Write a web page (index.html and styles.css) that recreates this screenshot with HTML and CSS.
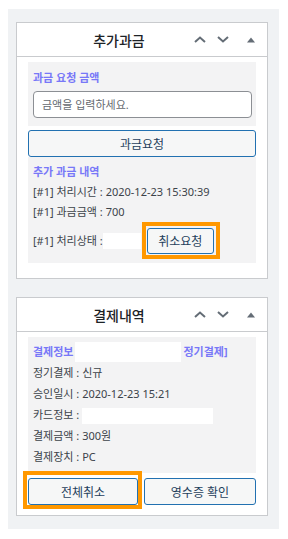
FILE: index.html
```html
<!DOCTYPE html>
<html lang="ko">
<head>
    <meta charset="UTF-8">
    <meta name="viewport" content="width=device-width, initial-scale=1.0">
    <title>결제 관리</title>
    <link rel="stylesheet" href="styles.css">
</head>
<body>
    <div class="wrap">
        <div class="panel">
            <div class="panel-head">
                <h2 class="panel-title">추가과금</h2>
                <div class="actions">
                    <button class="handle" aria-label="위로">
                        <svg width="12" height="7" viewBox="0 0 12 7"><polyline points="1,6 6,1.5 11,6" /></svg>
                    </button>
                    <button class="handle" aria-label="아래로">
                        <svg width="12" height="7" viewBox="0 0 12 7"><polyline points="1,1 6,5.5 11,1" /></svg>
                    </button>
                    <button class="handle toggle" aria-label="접기">
                        <svg width="8" height="6" viewBox="0 0 8 6"><polygon points="0,5.5 4,0.5 8,5.5" /></svg>
                    </button>
                </div>
            </div>
            <div class="panel-body">
                <div class="box box-form">
                    <label class="label" for="amount">과금 요청 금액</label>
                    <input type="text" id="amount" class="field" placeholder="금액을 입력하세요.">
                </div>
                <button class="btn btn-block">과금요청</button>
                <div class="box box-history">
                    <div class="label">추가 과금 내역</div>
                    <div class="row">[#1] 처리시간 : 2020-12-23 15:30:39</div>
                    <div class="row">[#1] 과금금액 : 700</div>
                    <div class="row row-status">
                        <span>[#1] 처리상태 : </span><span class="blank blank-status"></span>
                        <span class="hl hl-cancel"><button class="btn btn-small">취소요청</button></span>
                    </div>
                </div>
            </div>
        </div>

        <div class="panel">
            <div class="panel-head">
                <h2 class="panel-title">결제내역</h2>
                <div class="actions">
                    <button class="handle" aria-label="위로">
                        <svg width="12" height="7" viewBox="0 0 12 7"><polyline points="1,6 6,1.5 11,6" /></svg>
                    </button>
                    <button class="handle" aria-label="아래로">
                        <svg width="12" height="7" viewBox="0 0 12 7"><polyline points="1,1 6,5.5 11,1" /></svg>
                    </button>
                    <button class="handle toggle" aria-label="접기">
                        <svg width="8" height="6" viewBox="0 0 8 6"><polygon points="0,5.5 4,0.5 8,5.5" /></svg>
                    </button>
                </div>
            </div>
            <div class="panel-body">
                <div class="box box-pay">
                    <div class="row row-head"><span class="label">결제정보</span><span class="blank blank-info"></span><span class="label">정기결제]</span></div>
                    <div class="row">정기결제 : 신규</div>
                    <div class="row">승인일시 : 2020-12-23 15:21</div>
                    <div class="row">카드정보 : <span class="blank blank-card"></span></div>
                    <div class="row">결제금액 : 300원</div>
                    <div class="row">결제장치 : PC</div>
                </div>
                <div class="btn-row">
                    <span class="hl hl-refund"><button class="btn">전체취소</button></span>
                    <button class="btn">영수증 확인</button>
                </div>
            </div>
        </div>
    </div>
</body>
</html>
```

FILE: styles.css
```css
body {
    margin: 0;
    background-color: #fff;
    font-family: "Noto Sans", "Noto Sans CJK KR", sans-serif;
    color: #3c434a;
}

.wrap {
    width: 252px;
    margin: 9px 0 0 8px;
    padding: 13px 11px 13px 8px;
    background-color: #f0f2f4;
}

.panel {
    background-color: #fff;
    border: 1px solid #c9cbce;
    margin-bottom: 18px;
}

.panel:last-child {
    margin-bottom: 0;
}

.panel-head {
    display: flex;
    align-items: center;
    height: 33px;
    border-bottom: 1px solid #c9cbce;
}

.panel-title {
    flex: 1;
    margin: 0;
    padding-left: 31px;
    text-align: center;
    font-size: 14px;
    font-weight: 500;
    color: #1d2327;
}

.actions {
    display: flex;
    align-items: center;
    padding-right: 6px;
}

.handle {
    width: 20px;
    height: 20px;
    padding: 0;
    margin-left: 3px;
    border: none;
    background: none;
    display: flex;
    align-items: center;
    justify-content: center;
}

.handle:first-child {
    margin-left: 0;
}

.handle.toggle {
    margin-left: 8px;
}

.handle polyline {
    fill: none;
    stroke: #646d76;
    stroke-width: 2;
}

.handle polygon {
    fill: #646d76;
}

.panel-body {
    padding: 5px 11px 15px;
}

.panel:last-child .panel-body {
    padding-bottom: 10px;
}

.box {
    background-color: #f3f3f4;
    padding: 0 4px 0 5px;
    font-size: 11px;
}

.box-form {
    padding-top: 7px;
    padding-bottom: 8px;
}

.box-history {
    padding-top: 5px;
    padding-bottom: 9px;
}

.box-pay {
    padding-top: 5px;
    padding-bottom: 6px;
}

.label {
    display: block;
    font-size: 11px;
    font-weight: 700;
    line-height: 18px;
    color: #7878f8;
}

.box-form .label {
    margin-bottom: 4px;
}

.box-history .label {
    line-height: 20px;
}

.field {
    display: block;
    box-sizing: border-box;
    width: 100%;
    height: 27px;
    padding: 0 8px;
    border: 1px solid #8c8f94;
    border-radius: 4px;
    background-color: #fff;
    font-family: inherit;
    font-size: 11px;
    color: #3c434a;
}

.field::placeholder {
    color: #646970;
}

.row {
    line-height: 20px;
    font-size: 11px;
    color: #3c434a;
}

.box-pay .row {
    line-height: 21px;
}

.box-pay .row-head {
    display: flex;
    line-height: 20px;
}

.row-head .label {
    display: inline;
    line-height: 20px;
}

.row-status {
    display: flex;
    align-items: center;
    margin-top: 6px;
}

.blank {
    display: inline-block;
    background-color: #fff;
    vertical-align: middle;
}

.blank-status {
    width: 38px;
    height: 16px;
}

.blank-info {
    width: 106px;
    height: 20px;
    margin: 0 2px 0 2px;
}

.blank-card {
    width: 131px;
    height: 16px;
}

.btn {
    height: 27px;
    padding: 0;
    border: 1px solid #2271b1;
    border-radius: 3px;
    background-color: #f6f7f7;
    color: #1f3f5c;
    font-family: inherit;
    font-size: 12px;
}

.btn-block {
    display: block;
    width: 100%;
    margin: 4px 0 0;
}

.btn-small {
    width: 67px;
    height: 26px;
}

.btn-row {
    display: flex;
    gap: 6px;
    margin-top: 5px;
}

.btn-row .btn,
.btn-row .hl {
    flex: 1;
}

.btn-row .hl .btn {
    width: 100%;
}

.hl {
    position: relative;
    display: flex;
}

.hl::after {
    content: "";
    position: absolute;
    border: 4px solid #ff9800;
    pointer-events: none;
}

.hl-cancel {
    margin-left: 6px;
}

.hl-cancel::after {
    top: -6px;
    left: -5px;
    right: -6px;
    bottom: -5px;
}

.hl-refund::after {
    top: -7px;
    left: -5px;
    right: -4px;
    bottom: -4px;
}
```
